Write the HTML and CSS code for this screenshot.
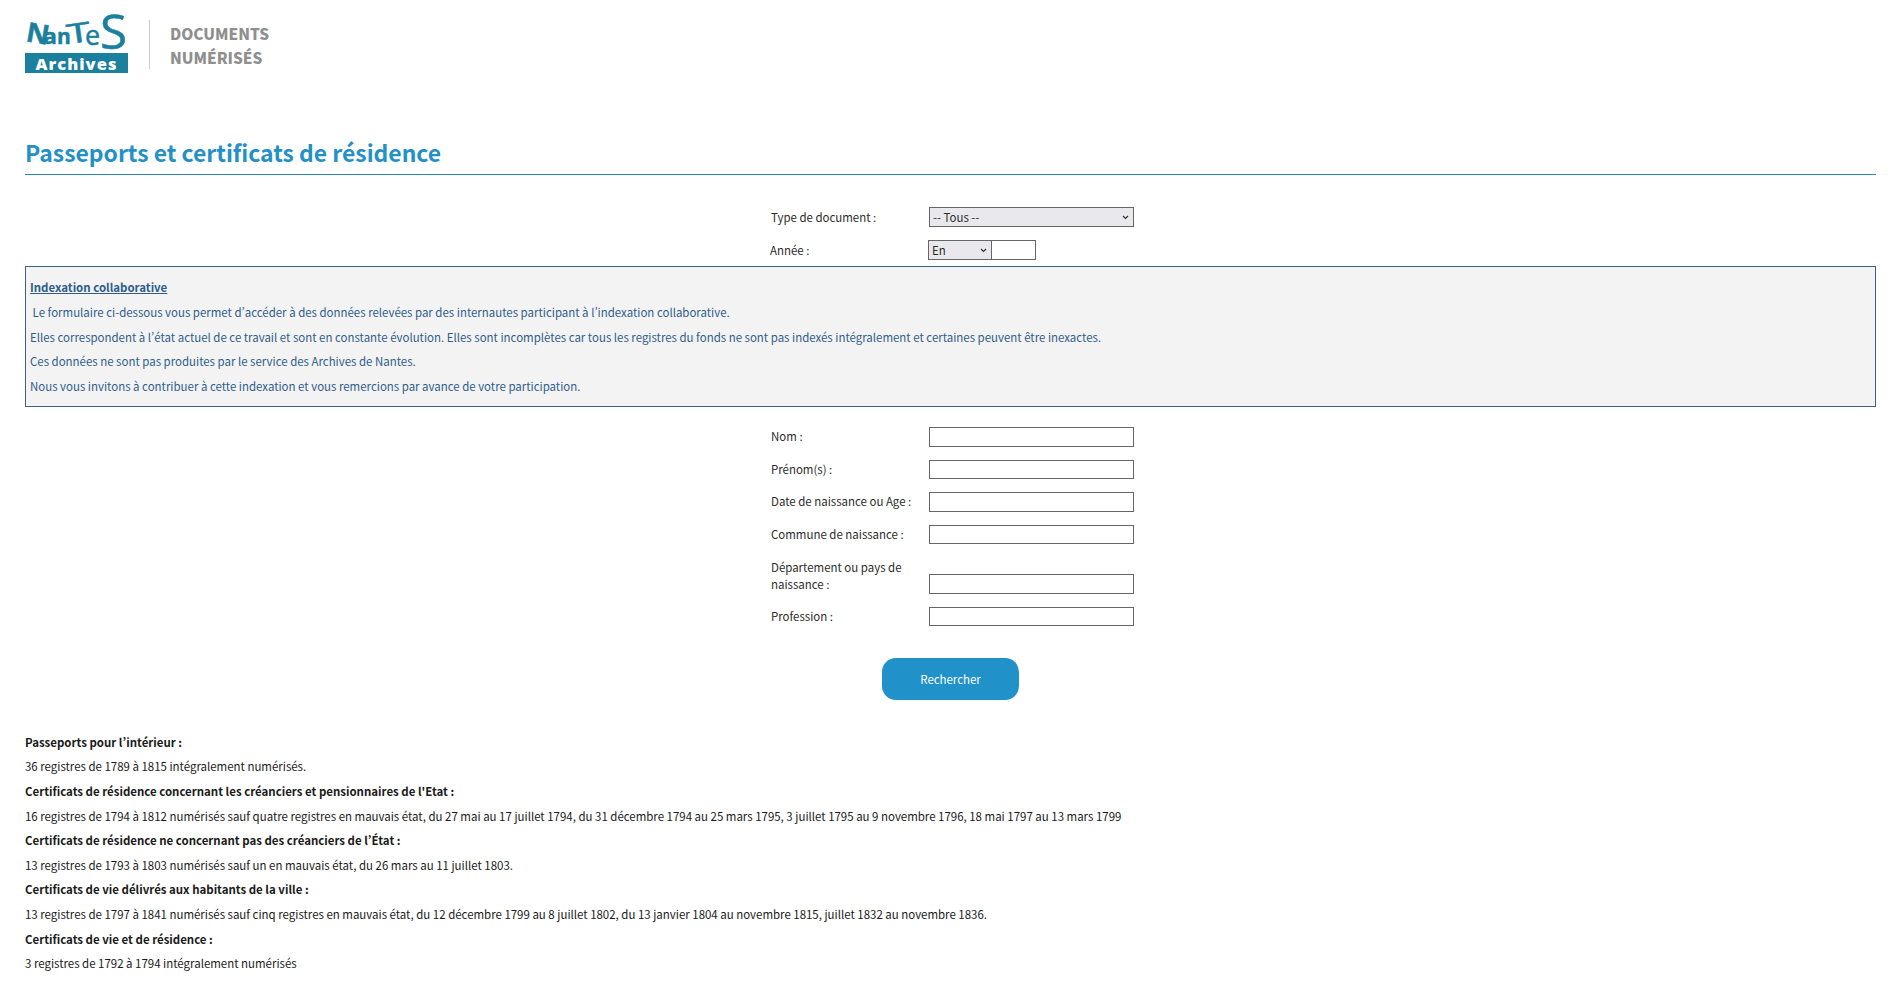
FILE: index.html
```html
<!DOCTYPE html>
<html lang="fr">
<head>
<meta charset="utf-8">
<title>Passeports et certificats de résidence</title>
<link rel="stylesheet" href="styles.css">
</head>
<body>
<header class="brand">
  <div class="logo">
    <svg class="logo-mark" width="106" height="60" viewBox="0 0 106 60">
      <g class="logo-letters">
        <text class="l-n" transform="translate(0 25) rotate(10) scale(1.05 1)">N</text>
        <text class="l-small" transform="translate(18 28) scale(1.1 1)">a</text>
        <text class="l-small" transform="translate(32 28)">n</text>
        <text class="l-t" transform="translate(43 28) rotate(-8) scale(1.6 1)">T</text>
        <text class="l-e" transform="translate(60 29)">e</text>
        <text class="l-s" transform="translate(75 33) scale(1.05 1)">S</text>
      </g>
      <rect x="0" y="37" width="103" height="20" class="logo-box"/>
      <text x="51.5" y="54" class="logo-archives">Archives</text>
    </svg>
    <div class="logo-sep"></div>
    <div class="logo-sub">DOCUMENTS<br>NUMÉRISÉS</div>
  </div>
</header>
<main class="page">
  <h1 class="title">Passeports et certificats de résidence</h1>
  <form class="search">
    <div class="fields top-fields">
      <label class="row">
        <span class="lab">Type de document :</span>
        <select class="sel wide"><option>-- Tous --</option></select>
      </label>
      <label class="row year">
        <span class="lab">Année :</span>
        <span class="year-ctl"><select class="sel small"><option>En</option></select><input class="inp yr" type="text"></span>
      </label>
    </div>
    <section class="notice">
      <p><a class="notice-head">Indexation collaborative</a></p>
      <p>&nbsp;Le formulaire ci-dessous vous permet d’accéder à des données relevées par des internautes participant à l’indexation collaborative.</p>
      <p>Elles correspondent à l’état actuel de ce travail et sont en constante évolution. Elles sont incomplètes car tous les registres du fonds ne sont pas indexés intégralement et certaines peuvent être inexactes.</p>
      <p>Ces données ne sont pas produites par le service des Archives de Nantes.</p>
      <p>Nous vous invitons à contribuer à cette indexation et vous remercions par avance de votre participation.</p>
    </section>
    <div class="fields main-fields">
      <label class="row"><span class="lab">Nom :</span><input class="inp wide" type="text"></label>
      <label class="row"><span class="lab">Prénom(s) :</span><input class="inp wide" type="text"></label>
      <label class="row"><span class="lab">Date de naissance ou Age :</span><input class="inp wide" type="text"></label>
      <label class="row"><span class="lab">Commune de naissance :</span><input class="inp wide" type="text"></label>
      <label class="row tall"><span class="lab">Département ou pays de naissance :</span><input class="inp wide" type="text"></label>
      <label class="row"><span class="lab">Profession :</span><input class="inp wide" type="text"></label>
    </div>
    <div class="actions"><button class="btn" type="button">Rechercher</button></div>
  </form>
  <section class="info">
    <p><strong>Passeports pour l’intérieur :</strong></p>
    <p>36 registres de 1789 à 1815 intégralement numérisés.</p>
    <p><strong>Certificats de résidence concernant les créanciers et pensionnaires de l'Etat :</strong></p>
    <p>16 registres de 1794 à 1812 numérisés sauf quatre registres en mauvais état, du 27 mai au 17 juillet 1794, du 31 décembre 1794 au 25 mars 1795, 3 juillet 1795 au 9 novembre 1796, 18 mai 1797 au 13 mars 1799</p>
    <p><strong>Certificats de résidence ne concernant pas des créanciers de l’État :</strong></p>
    <p>13 registres de 1793 à 1803 numérisés sauf un en mauvais état, du 26 mars au 11 juillet 1803.</p>
    <p><strong>Certificats de vie délivrés aux habitants de la ville :</strong></p>
    <p>13 registres de 1797 à 1841 numérisés sauf cinq registres en mauvais état, du 12 décembre 1799 au 8 juillet 1802, du 13 janvier 1804 au novembre 1815, juillet 1832 au novembre 1836.</p>
    <p><strong>Certificats de vie et de résidence :</strong></p>
    <p>3 registres de 1792 à 1794 intégralement numérisés</p>
  </section>
</main>
</body>
</html>
```
FILE: styles.css
```css
* { box-sizing: border-box; }
html, body { margin: 0; padding: 0; background: #fff; }
body {
  font-family: "Noto Sans CJK SC", "Noto Sans", sans-serif;
  font-variant-east-asian: proportional-width;
  font-size: 11.46px;
  line-height: 17px;
  color: #2b2b2b;
}
.brand { padding: 16px 20px 0 25px; height: 135px; }
.logo { display: flex; align-items: flex-start; }
.logo-mark { display: block; flex: none; overflow: visible; }
.logo-letters text { fill: #1b7f9e; stroke: #1b7f9e; stroke-width: 0.5; font-family: "Open Sans", sans-serif; font-weight: 700; }
.l-n { font-size: 27px; }
.logo-letters .l-t { font-size: 27px; font-weight: 400; }
.l-small { font-size: 21px; }
.logo-letters .l-e { font-size: 27px; font-weight: 400; }
.logo-letters .l-s { font-size: 47px; font-weight: 400; }
.logo-box { fill: #1b7f9e; }
.logo-archives { fill: #fff; font-family: "Open Sans", sans-serif; font-weight: 800; font-size: 16.5px; letter-spacing: 1px; text-anchor: middle; }
.logo-sep { width: 1px; height: 49px; margin: 4px 0 0 18px; background: #ccc; }
.logo-sub { margin: 5px 0 0 20px; color: #8f8f8f; font-size: 15.4px; line-height: 24px; font-weight: 900; }
.page { padding: 0 20px 0 25px; }
.title { margin: 0; height: 40px; color: #2390c6; font-size: 22.9px; line-height: 34px; font-weight: 700; border-bottom: 1px solid #2c86b6; }
.fields { display: flex; flex-direction: column; gap: 13px; width: 367px; margin-left: 746px; }
.top-fields { padding: 32px 0 6px; }
.main-fields { padding-top: 20px; }
.row { display: flex; align-items: center; min-height: 19.5px; }
.row.tall { min-height: 36.5px; align-items: flex-end; }
.lab { width: 158px; flex: none; padding: 0 8px 0 0; }
.row.tall .lab { padding: 0 8px 1px 0; }
.year .lab { margin-left: -1px; }
.sel, .inp { font: inherit; color: #2b2b2b; border: 1px solid #666; border-radius: 0; height: 19.5px; padding: 0 3px; margin: 0; background: #fff; }
.top-fields .sel, .top-fields .inp { height: 20px; }
.sel {
  appearance: none;
  background: #e9e9ed url("data:image/svg+xml,%3Csvg xmlns='http://www.w3.org/2000/svg' width='7' height='5'%3E%3Cpath d='M1 1l2.5 2.5L6 1' fill='none' stroke='%23333' stroke-width='1.2'/%3E%3C/svg%3E") no-repeat right 4px center;
  line-height: 18px;
}
.wide { width: 205px; }
.year-ctl { display: flex; }
.small { width: 64px; }
.yr { width: 45px; margin-left: -1px; }
.notice { height: 141px; padding: 12.2px 4px 0; background: #f3f3f4; border: 1px solid #3d5f88; color: #2f5d8a; }
.notice p { margin: 0 0 7.7px; }
.notice-head { font-weight: 700; text-decoration: underline; }
.actions { display: flex; justify-content: center; padding-top: 32px; }
.btn { width: 137px; height: 42px; border: 0; border-radius: 14px; background: #2191c9; color: #fff; font: inherit; }
.info { margin-top: 33.9px; color: #1a1a1a; }
.info p { margin: 0 0 7.6px; }
```
